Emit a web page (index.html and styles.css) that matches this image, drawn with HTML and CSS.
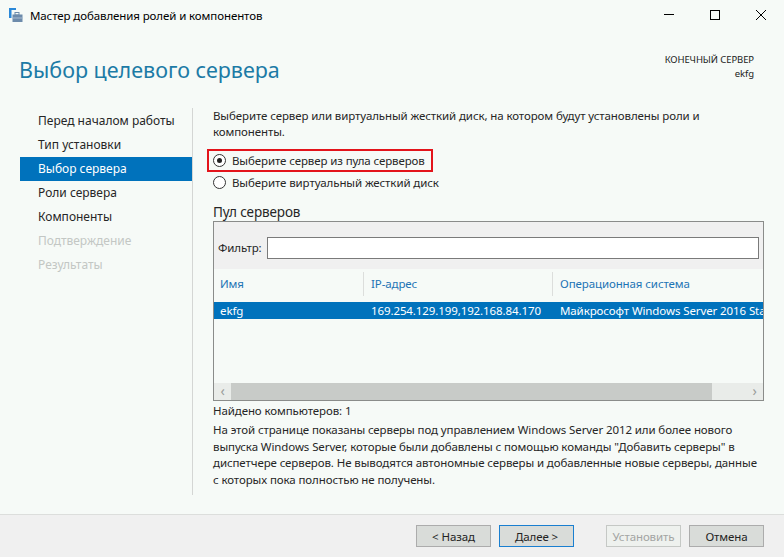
FILE: index.html
```html
<html>
<head>
<meta charset="UTF-8">
<link rel="stylesheet" href="styles.css">
</head>
<body>
<div class="window">

<div class="titlebar">
  <svg class="app-icon" width="16" height="16" viewBox="0 0 16 16">
    <rect x="1" y="1" width="7" height="2" fill="#2b88d8"/>
    <rect x="1" y="1" width="2.5" height="10" fill="#2b88d8"/>
    <rect x="7" y="5.5" width="4" height="2.5" fill="none" stroke="#6d8bab" stroke-width="1"/>
    <rect x="4.5" y="7.5" width="10" height="7.5" fill="#6d8bab"/>
    <rect x="4.5" y="10.5" width="10" height="1" fill="#a9bdd2"/>
  </svg>
  <span class="title">Мастер добавления ролей и компонентов</span>
  <div class="ctrl">
    <svg width="10" height="10" viewBox="0 0 10 10"><line x1="0" y1="4.5" x2="10" y2="4.5" stroke="#000" stroke-width="1"/></svg>
  </div>
  <div class="ctrl">
    <svg width="10" height="10" viewBox="0 0 10 10"><rect x="0.5" y="0.5" width="9" height="9" fill="none" stroke="#000" stroke-width="1"/></svg>
  </div>
  <div class="ctrl">
    <svg width="10" height="10" viewBox="0 0 10 10"><path d="M0 0 L10 10 M10 0 L0 10" stroke="#000" stroke-width="1"/></svg>
  </div>
</div>

<div class="header">
  <h1>Выбор целевого сервера</h1>
  <div class="target">
    <div>КОНЕЧНЫЙ СЕРВЕР</div>
    <div>ekfg</div>
  </div>
</div>

<div class="main">
  <div class="steps">
    <div class="step">Перед началом работы</div>
    <div class="step">Тип установки</div>
    <div class="step current">Выбор сервера</div>
    <div class="step">Роли сервера</div>
    <div class="step">Компоненты</div>
    <div class="step disabled">Подтверждение</div>
    <div class="step disabled">Результаты</div>
  </div>

  <div class="content">
    <p class="intro">Выберите сервер или виртуальный жесткий диск, на котором будут установлены роли и<br>компоненты.</p>

    <div class="choices">
      <div class="choice highlight"><span class="radio checked"></span>Выберите сервер из пула серверов</div>
      <div class="choice"><span class="radio"></span>Выберите виртуальный жесткий диск</div>
    </div>

    <div class="pool-title">Пул серверов</div>
    <div class="pool">
      <div class="filter">
        <span class="filter-label">Фильтр:</span>
        <input class="filter-input" type="text">
      </div>
      <div class="grid-head">
        <div class="col col-name">Имя</div>
        <div class="col col-ip">IP-адрес</div>
        <div class="col col-os">Операционная система</div>
      </div>
      <div class="grid-row selected">
        <div class="col col-name">ekfg</div>
        <div class="col col-ip">169.254.129.199,192.168.84.170</div>
        <div class="col col-os">Майкрософт Windows Server 2016 Standard</div>
      </div>
      <div class="hscroll">
        <div class="arrow">&#8249;</div>
        <div class="thumb"></div>
        <div class="track"></div>
        <div class="arrow">&#8250;</div>
      </div>
    </div>

    <div class="found">Найдено компьютеров: 1</div>
    <p class="note">На этой странице показаны серверы под управлением Windows Server 2012 или более нового<br>выпуска Windows Server, которые были добавлены с помощью команды "Добавить серверы" в<br>диспетчере серверов. Не выводятся автономные серверы и добавленные новые серверы, данные<br>с которых пока полностью не получены.</p>
  </div>
</div>

<div class="footer">
  <button class="btn">&lt; Назад</button>
  <button class="btn default">Далее &gt;</button>
  <button class="btn spaced" disabled>Установить</button>
  <button class="btn">Отмена</button>
</div>

</div>
</body>
</html>
```

FILE: styles.css
```css
body {
   margin: 0;
   background-color: #f6faf7;
   font-family: 'Noto Sans', 'DejaVu Sans', sans-serif;
   font-size: 11.5px;
   letter-spacing: -0.1px;
   color: #262626;
}
.window {
   width: 784px;
   height: 557px;
   display: flex;
   flex-direction: column;
   overflow: hidden;
}
.titlebar {
   height: 30px;
   display: flex;
   align-items: center;
   flex-shrink: 0;
}
.app-icon {
   margin-left: 8px;
   margin-right: 6px;
}
.title {
   flex: 1;
   color: #000;
}
.ctrl {
   width: 46px;
   height: 30px;
   display: flex;
   align-items: center;
   justify-content: center;
}
.header {
   height: 78px;
   display: flex;
   justify-content: space-between;
   align-items: flex-start;
   flex-shrink: 0;
}
.header h1 {
   margin: 25px 0 0 19px;
   font-size: 21.5px;
   font-weight: normal;
   line-height: 30px;
   letter-spacing: 0;
   color: #1c7ba6;
}
.target {
   margin-top: 23px;
   margin-right: 30px;
   text-align: right;
   font-size: 9.5px;
   line-height: 14px;
   color: #222;
}
.main {
   flex: 1;
   display: flex;
}
.steps {
   width: 173px;
   height: 387px;
   margin-left: 20px;
   padding-top: 1px;
   border-right: 1px solid #d4d6d4;
   box-sizing: border-box;
   font-size: 12px;
   letter-spacing: 0;
}
.step {
   height: 24px;
   line-height: 24px;
   padding-left: 18px;
   white-space: nowrap;
}
.step.current {
   background: #0072bc;
   color: #fff;
}
.step.disabled {
   color: #c3c7c4;
}
.content {
   margin-left: 20px;
   width: 551px;
}
.intro {
   margin: 0;
   line-height: 16px;
   white-space: nowrap;
}
.choices {
   margin-top: 9px;
}
.choice {
   display: flex;
   align-items: center;
   height: 20px;
   white-space: nowrap;
}
.highlight {
   width: 226px;
   height: 23px;
   margin-left: -6px;
   padding-left: 4px;
   border: 2px solid #e3141b;
   box-sizing: border-box;
}
.radio {
   width: 13px;
   height: 13px;
   flex-shrink: 0;
   border: 1px solid #333;
   border-radius: 50%;
   box-sizing: border-box;
   margin-right: 6px;
   display: flex;
   align-items: center;
   justify-content: center;
   background: #fff;
}
.radio.checked::after {
   content: "";
   width: 5px;
   height: 5px;
   border-radius: 50%;
   background: #222;
}
.pool-title {
   margin-top: 11px;
   font-size: 13.5px;
   line-height: 18px;
}
.pool {
   height: 180px;
   border: 1px solid #8a8c8a;
   box-sizing: border-box;
   display: flex;
   flex-direction: column;
   overflow: hidden;
}
.filter {
   height: 47px;
   flex-shrink: 0;
   background: #f0f0f0;
   display: flex;
   align-items: flex-start;
   padding: 15px 4px 0 4px;
   box-sizing: border-box;
   gap: 5px;
}
.filter-label {
   line-height: 22px;
}
.filter-input {
   flex: 1;
   height: 22px;
   border: 1px solid #7a7a7a;
   background: #fff;
   box-sizing: border-box;
   margin: 0;
}
.grid-head {
   height: 29px;
   flex-shrink: 0;
   display: flex;
   align-items: center;
   color: #1d74b5;
}
.grid-row {
   margin-top: 4px;
   height: 17px;
   display: flex;
   align-items: center;
   flex-shrink: 0;
}
.grid-row.selected {
   background: #0072bc;
   color: #fff;
}
.col {
   white-space: nowrap;
   overflow: hidden;
   box-sizing: border-box;
}
.col-name {
   width: 149px;
   padding-left: 6px;
}
.col-ip {
   width: 189px;
   padding-left: 7px;
}
.col-os {
   flex: 1;
   padding-left: 7px;
}
.grid-head .col {
   line-height: 24px;
}
.grid-head .col-ip,
.grid-head .col-os {
   border-left: 1px solid #dcdedc;
}
.grid-row .col-ip,
.grid-row .col-os {
   padding-left: 8px;
}
.hscroll {
   margin-top: auto;
   height: 17px;
   display: flex;
   background: #e9ece9;
   flex-shrink: 0;
}
.arrow {
   width: 17px;
   line-height: 16px;
   text-align: center;
   color: #9a9c9a;
   font-size: 14px;
}
.thumb {
   width: 481px;
   background: #c8cbc8;
}
.track {
   flex: 1;
}
.found {
   margin-top: 2px;
   line-height: 16px;
}
.note {
   margin: 3px 0 0 0;
   line-height: 16.5px;
   white-space: nowrap;
}
.footer {
   height: 43px;
   flex-shrink: 0;
   border-top: 1px solid #dcdedc;
   background: #f0f0f0;
   box-sizing: border-box;
   display: flex;
   justify-content: flex-end;
   align-items: flex-start;
   padding: 10px 20px 0 0;
}
.btn {
   width: 75px;
   height: 22px;
   margin-left: 8px;
   background: #d9dcd9;
   border: 1px solid #acacac;
   font-family: 'Noto Sans', 'DejaVu Sans', sans-serif;
   font-size: 11.5px;
   letter-spacing: -0.1px;
   color: #222;
   padding: 0;
}
.btn.default {
   border-color: #1a7fd0;
}
.btn.spaced {
   margin-left: 32px;
}
.btn:disabled {
   background: #eef1ee;
   border-color: #c5c8c5;
   color: #a3a5a3;
}
```
